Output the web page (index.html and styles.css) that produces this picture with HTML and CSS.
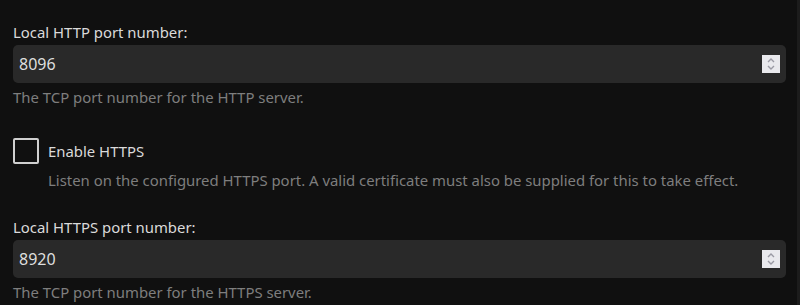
FILE: index.html
```html
<!DOCTYPE html>
<html lang="en">
  <head>
    <meta charset="UTF-8" />
    <title>Networking</title>
    <link rel="stylesheet" href="styles.css">
  </head>
  <body>
    <div class="page">
      <div class="input-container">
        <label class="input-label" for="txtPortNumber">Local HTTP port number:</label>
        <div class="number-input">
          <input id="txtPortNumber" type="text" value="8096" />
          <div class="spinner">
            <svg width="10" height="14" viewBox="0 0 10 14">
              <path d="M2 5 L5 2 L8 5 M2 9 L5 12 L8 9" fill="none" stroke="#9a9aa4" stroke-width="1.4" />
            </svg>
          </div>
        </div>
        <div class="field-description">The TCP port number for the HTTP server.</div>
      </div>

      <div class="checkbox-container">
        <label class="checkbox-label">
          <span class="checkbox"></span>
          <span>Enable HTTPS</span>
        </label>
        <div class="field-description checkbox-description">
          Listen on the configured HTTPS port. A valid certificate must also be supplied for this to take effect.
        </div>
      </div>

      <div class="input-container">
        <label class="input-label" for="txtHttpsPort">Local HTTPS port number:</label>
        <div class="number-input">
          <input id="txtHttpsPort" type="text" value="8920" />
          <div class="spinner">
            <svg width="10" height="14" viewBox="0 0 10 14">
              <path d="M2 5 L5 2 L8 5 M2 9 L5 12 L8 9" fill="none" stroke="#9a9aa4" stroke-width="1.4" />
            </svg>
          </div>
        </div>
        <div class="field-description">The TCP port number for the HTTPS server.</div>
      </div>
    </div>
    <div class="scrollbar"></div>
  </body>
</html>
```

FILE: styles.css
```css
* {
  margin: 0;
  padding: 0;
  box-sizing: border-box;
}

body {
  background: #101010;
  color: #dadada;
  font-family: 'Noto Sans', sans-serif;
  font-size: 14.9px;
  line-height: 21px;
  overflow: hidden;
  display: flex;
  height: 305px;
}

.page {
  flex: 1;
  padding: 22px 11px 0 13px;
}

.scrollbar {
  width: 3px;
  background: #1c1c1c;
}

.input-container {
  margin-bottom: 30px;
}

.input-label {
  display: block;
  margin-bottom: 2px;
}

.number-input {
  position: relative;
  height: 38px;
  background: #292929;
  border-radius: 5px;
}

.number-input input {
  width: 100%;
  height: 100%;
  background: transparent;
  border: none;
  outline: none;
  color: #dedede;
  font-family: 'Noto Sans', sans-serif;
  font-size: 16px;
  padding: 0 6px;
}

.spinner {
  position: absolute;
  right: 6px;
  top: 10px;
  width: 18px;
  height: 18px;
  background: #e9e9ed;
  display: flex;
  align-items: center;
  justify-content: center;
}

.field-description {
  margin-top: 4px;
  color: #7e7e7e;
}

.checkbox-container {
  margin-bottom: 26px;
}

.checkbox-label {
  display: flex;
  align-items: center;
  gap: 9px;
}

.checkbox {
  width: 26px;
  height: 26px;
  border: 2px solid #d0d0d0;
  border-radius: 2px;
}

.checkbox-description {
  margin-top: 6px;
  padding-left: 35px;
}
```
